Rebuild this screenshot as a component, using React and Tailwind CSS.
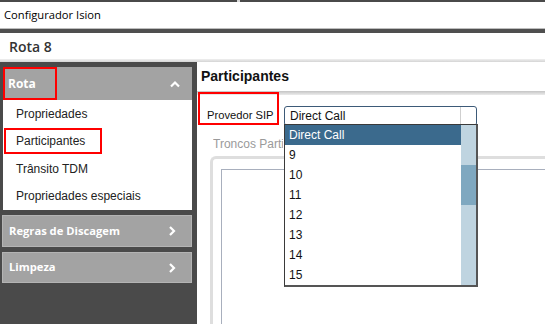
import React from "react";

const menuItems = ["Propriedades", "Participantes", "Trânsito TDM", "Propriedades especiais"];
const options = ["Direct Call", "9", "10", "11", "12", "13", "14", "15"];

function Chevron({ up }) {
  return (
    <svg width="12" height="12" viewBox="0 0 12 12" className="shrink-0">
      {up ? (
        <polyline points="2,8.5 6,4.5 10,8.5" fill="none" stroke="#fff" strokeWidth="2.2" />
      ) : (
        <polyline points="4,2 8,6 4,10" fill="none" stroke="#fff" strokeWidth="2.2" />
      )}
    </svg>
  );
}

function SideButton({ label, className }) {
  return (
    <div
      className={`flex items-center justify-between pl-[6px] pr-[13px] bg-[#a3a3a3] border border-[#b4b4b4] text-white font-bold text-[11.2px] ${className}`}
      style={{ fontFamily: '"Open Sans", sans-serif' }}
    >
      <span>{label}</span>
      <Chevron />
    </div>
  );
}

export default function App() {
  return (
    <div
      className="w-[545px] h-[324px] bg-white overflow-hidden flex flex-col"
      style={{ fontFamily: '"Liberation Sans", Arial, sans-serif' }}
    >
      {/* window top edge */}
      <div className="h-[2px] flex shrink-0">
        <div className="w-[237px] bg-[#4a4a4a]" />
        <div className="w-[3px] bg-[#d8d8d8]" />
        <div className="flex-1 bg-[#4a4a4a]" />
      </div>

      {/* title bar */}
      <div
        className="h-[26px] shrink-0 flex items-center pl-[4px] text-[11.2px] text-black"
        style={{ fontFamily: '"Open Sans", sans-serif' }}
      >
        Configurador Ision
      </div>
      <div className="h-[5px] shrink-0 border-t border-[#bdbdbd] bg-[#4f4f4f]" />

      {/* page header */}
      <div
        className="h-[26px] shrink-0 flex items-center pl-[9px] text-[14px] font-semibold text-[#333]"
        style={{ fontFamily: '"Open Sans", sans-serif' }}
      >
        Rota 8
      </div>
      <div className="h-[3px] shrink-0 bg-gradient-to-b from-[#f0f0f0] to-[#d4d4d4]" />

      <div className="flex flex-1 min-h-0">
        {/* sidebar */}
        <div className="w-[197px] shrink-0 bg-[#4a4a4a] pl-[3px] pr-[5px] pt-[5px] flex flex-col">
          <div
            className="relative h-[33px] flex items-center justify-between pl-[5px] pr-[11px] bg-[#a3a3a3] text-white font-bold text-[12px]"
            style={{ fontFamily: '"Open Sans", sans-serif' }}
          >
            <span>Rota</span>
            <Chevron up />
            <div className="absolute left-0 top-0 w-[54px] h-[33px] border-2 border-[#ff0000]" />
          </div>
          <div className="relative h-[110px] bg-white flex flex-col">
            {menuItems.map((item) => (
              <div key={item} className="h-[27.5px] flex items-center pl-[13px] text-[12px] text-[#222]">
                {item}
              </div>
            ))}
            <div className="absolute left-[1px] top-[28px] w-[98px] h-[26px] border-2 border-[#ff0000]" />
          </div>
          <SideButton label="Regras de Discagem" className="mt-[5px] h-[32px] -ml-[1px]" />
          <SideButton label="Limpeza" className="mt-[5px] h-[31px] -ml-[1px]" />
        </div>

        {/* content */}
        <div className="relative flex-1 flex flex-col">
          <div className="h-[29px] shrink-0 flex items-center pl-[4px] text-[14px] font-bold text-[#111]">
            Participantes
          </div>
          <div className="h-[4px] shrink-0 bg-gradient-to-b from-[#c4c4c4] to-[#ececec]" />

          <div className="h-[33px] shrink-0 flex items-center pt-[8px]">
            <span className="pl-[10px] w-[87px] text-[11.2px] text-[#111] whitespace-nowrap">Provedor SIP</span>
            <div className="w-[193px] h-[20px] border border-[#3d5a78] rounded-[3px] flex items-center">
              <span className="flex-1 pl-[5px] text-[12px] text-[#111]">Direct Call</span>
              <div className="w-[16px] h-full border-l border-[#cfcfcf]" />
            </div>
          </div>

          <div className="ml-[16px] mt-[9px] w-[70px] overflow-hidden whitespace-nowrap text-[12px] text-[#9a9a9a] leading-[14px]">
            Troncos Participantes
          </div>
          <div className="ml-[13px] mt-[5px] flex-1 border-l-[3px] border-t-[3px] border-[#dedede] rounded-tl-[6px] pl-[8px] pt-[10px]">
            <div className="h-full border-l border-t border-[#a8afbd]" />
          </div>

          {/* red highlight */}
          <div className="absolute left-[1px] top-[30px] w-[81px] h-[33px] border-2 border-[#ff0000]" />

          {/* open dropdown */}
          <div className="absolute left-[87px] top-[62px] w-[194px] h-[163px] bg-white border border-[#3a3a3a] border-b-2 border-r-2 border-b-[#555] border-r-[#555] flex">
            <div className="flex-1 flex flex-col">
              {options.map((opt, i) => (
                <div
                  key={opt}
                  className={
                    i === 0
                      ? "h-[20px] flex items-center pl-[4px] text-[12px] bg-[#3b6a8d] text-white"
                      : "h-[20px] flex items-center pl-[4px] text-[12px] text-[#111]"
                  }
                >
                  {opt}
                </div>
              ))}
            </div>
            <div className="w-[15px] bg-[#bfd4e0] flex flex-col">
              <div className="h-[40px]" />
              <div className="h-[40px] bg-[#7fa8c0]" />
            </div>
          </div>
        </div>
      </div>
    </div>
  );
}
